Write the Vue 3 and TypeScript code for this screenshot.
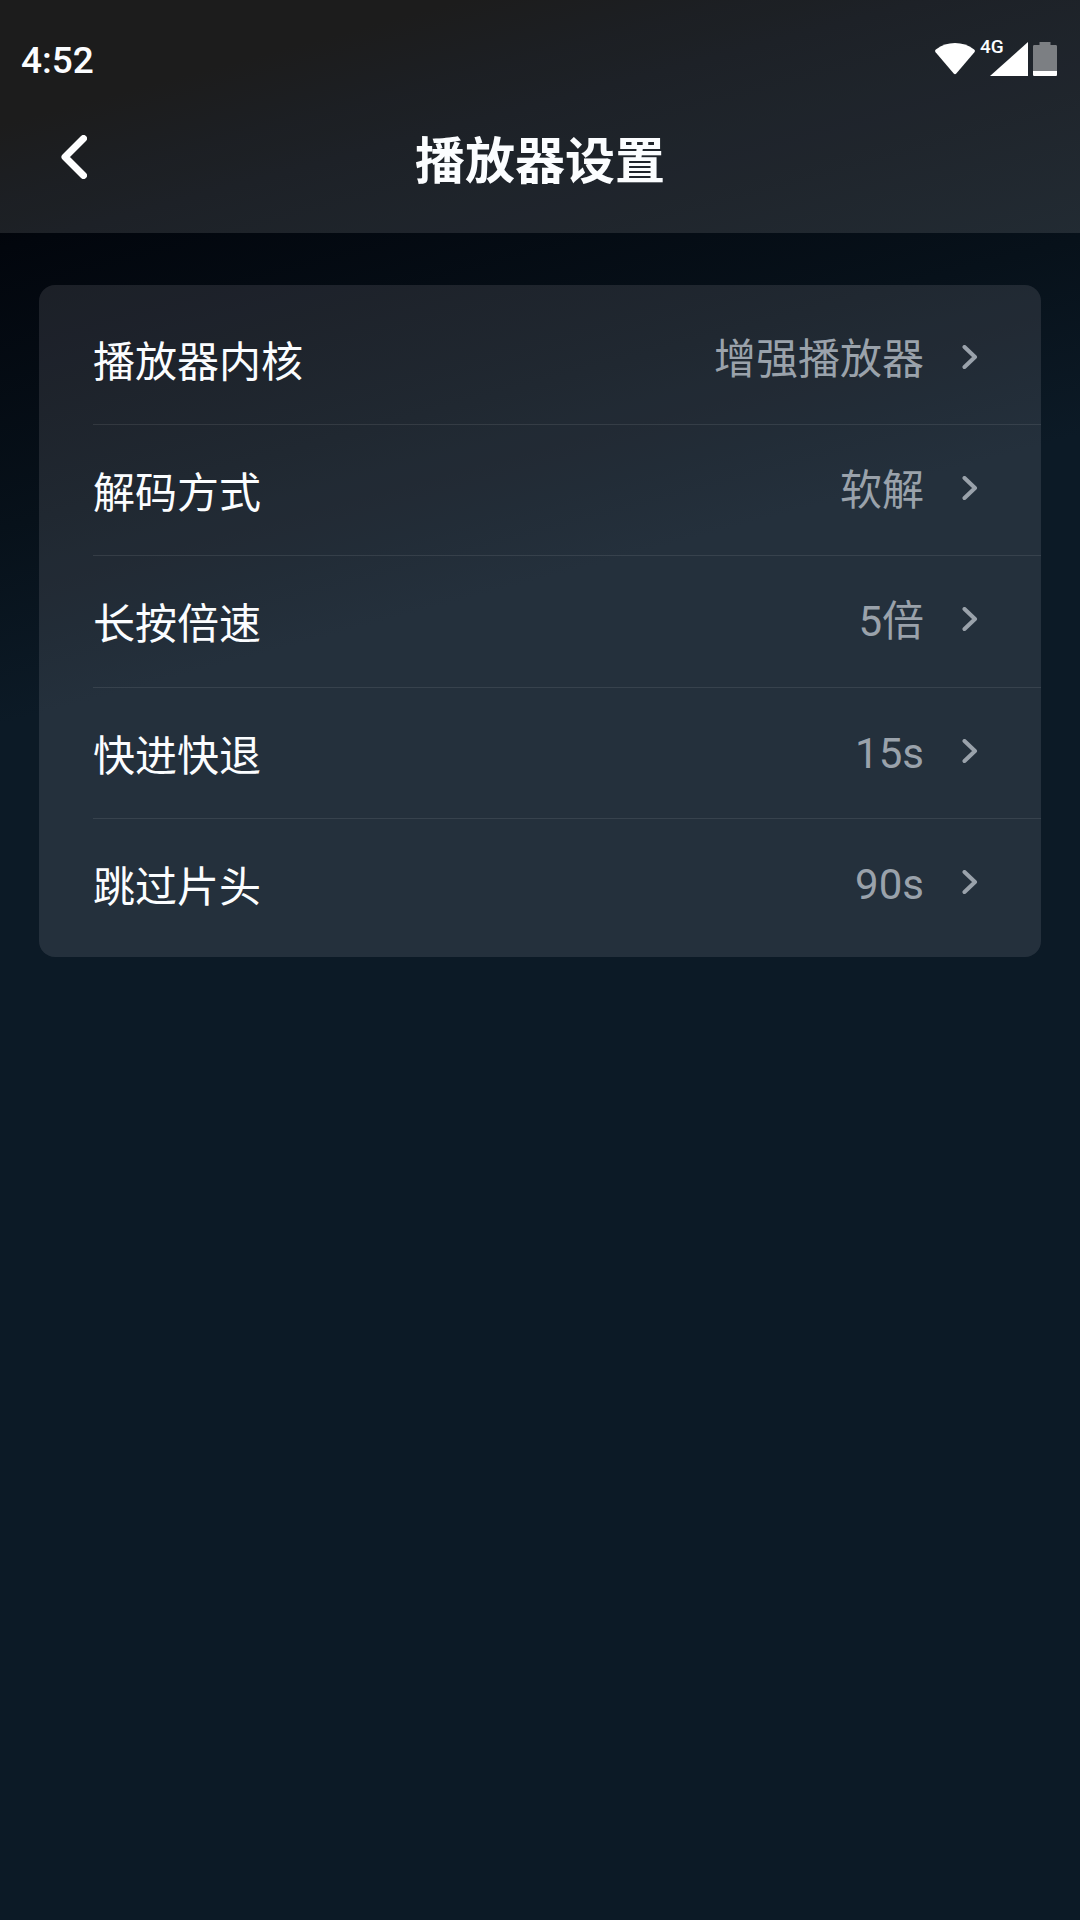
<script setup lang="ts">
interface SettingItem {
  id: string
  label: string
  value: string
}

const settings: SettingItem[] = [
  { id: 'kernel', label: '播放器内核', value: '增强播放器' },
  { id: 'decode', label: '解码方式', value: '软解' },
  { id: 'speed', label: '长按倍速', value: '5倍' },
  { id: 'seek', label: '快进快退', value: '15s' },
  { id: 'skip', label: '跳过片头', value: '90s' },
]
</script>

<template>
  <div class="screen">
    <header class="top">
      <div class="status">
        <time class="clock">4:52</time>
        <div class="status-icons">
          <svg class="wifi" viewBox="0 0 40 34" aria-hidden="true">
            <path d="M1.2 7.2C6.5 3.2 13 1 20 1s13.500 2.200 18.800 6.200c1.300 1 1.500 1.900.6 3L21.300 31.400c-.9 1-1.700 1-2.600 0L.6 10.200c-.9-1.100-.7-2 .6-3z" />
          </svg>
          <div class="cell">
            <span class="network">4G</span>
            <svg class="signal" viewBox="0 0 38 34" aria-hidden="true">
              <path d="M38 0v34H0z" />
            </svg>
          </div>
          <svg class="battery" viewBox="0 0 24 34" aria-hidden="true">
            <path class="battery-body" d="M6.500 0h11v3H22.500c1 0 1.500.5 1.500 1.500V29H0V4.500C0 3.500.5 3 1.500 3h5z" />
            <path d="M0 29h24v3.500c0 1-.5 1.500-1.500 1.500h-21C.5 34 0 33.500 0 32.500z" />
          </svg>
        </div>
      </div>
      <div class="nav">
        <button class="back" type="button" aria-label="返回">
          <svg viewBox="0 0 26 44" aria-hidden="true">
            <path d="M22.500 3.500L4 22l18.500 18.500" />
          </svg>
        </button>
        <h1 class="title">播放器设置</h1>
      </div>
    </header>

    <main class="content">
      <ul class="card">
        <li v-for="item in settings" :key="item.id" class="item">
          <button class="row" type="button">
            <span class="label">{{ item.label }}</span>
            <span class="value">{{ item.value }}</span>
            <svg class="chevron" viewBox="0 0 16 24" aria-hidden="true">
              <path d="M2.500 2L13 12 2.500 22" />
            </svg>
          </button>
        </li>
      </ul>
    </main>
  </div>
</template>

<style>
body {
  margin: 0;
  background: #0c1a26;
}
</style>

<style scoped>
.screen {
  min-height: 100vh;
  background: linear-gradient(165deg, #000000 0, #000101 120px, #02060d 240px, #07111a 510px, #0c1a26 700px);
  color: #fbfdff;
  font-family: Roboto, "Noto Sans CJK SC", sans-serif;
}

button {
  margin: 0;
  padding: 0;
  border: 0;
  background: none;
  color: inherit;
  font: inherit;
  cursor: pointer;
}

svg {
  display: block;
  fill: #ffffff;
}

.top {
  background: rgba(255, 255, 255, 0.11);
}

.status {
  display: flex;
  align-items: center;
  justify-content: space-between;
  height: 76px;
  padding: 21px 23px 0 21px;
}

.clock {
  padding-top: 4px;
  font-size: 37px;
  font-weight: 500;
  line-height: 42px;
}

.status-icons {
  display: flex;
  align-items: center;
  gap: 5px;
}

.wifi {
  width: 40px;
  height: 34px;
}

.cell {
  position: relative;
  display: flex;
  justify-content: flex-end;
  width: 48px;
}

.network {
  position: absolute;
  top: -5px;
  left: 0;
  font-size: 19px;
  font-weight: 500;
  line-height: 20px;
}

.signal {
  width: 38px;
  height: 34px;
}

.battery {
  width: 24px;
  height: 34px;
}

.battery-body {
  fill: #7c7f83;
}

.nav {
  display: grid;
  grid-template-columns: 1fr auto 1fr;
  align-items: center;
  height: 130px;
  padding: 0 39px 6px;
}

.back {
  display: flex;
  align-items: center;
  justify-self: start;
  height: 80px;
  padding: 0 22px 10px;
}

.back svg {
  width: 26px;
  height: 44px;
}

.back path {
  fill: none;
  stroke: #ffffff;
  stroke-width: 7;
  stroke-linecap: round;
  stroke-linejoin: round;
}

.title {
  margin: 0;
  font-size: 50px;
  font-weight: 700;
  line-height: 72px;
}

.content {
  padding: 52px 39px;
}

.card {
  display: grid;
  grid-auto-rows: 1fr;
  box-sizing: border-box;
  min-height: 672px;
  margin: 0;
  padding: 8px 0 8px 54px;
  border-radius: 16px;
  background: rgba(255, 250, 255, 0.1);
  list-style: none;
}

.item {
  display: flex;
}

.item + .item {
  border-top: 1px solid rgba(255, 255, 255, 0.09);
}

.row {
  display: flex;
  flex: 1;
  align-items: center;
  padding-right: 63px;
  font-size: 42px;
  line-height: 64px;
  text-align: left;
}

.label {
  flex: 1;
  padding-top: 8px;
}

.value {
  padding-top: 2px;
  color: #9aa2ab;
}

.chevron {
  width: 16px;
  height: 24px;
  margin: 0 0 4px 38px;
}

.chevron path {
  fill: none;
  stroke: #9aa2ab;
  stroke-width: 4;
  stroke-linecap: round;
  stroke-linejoin: round;
}
</style>
